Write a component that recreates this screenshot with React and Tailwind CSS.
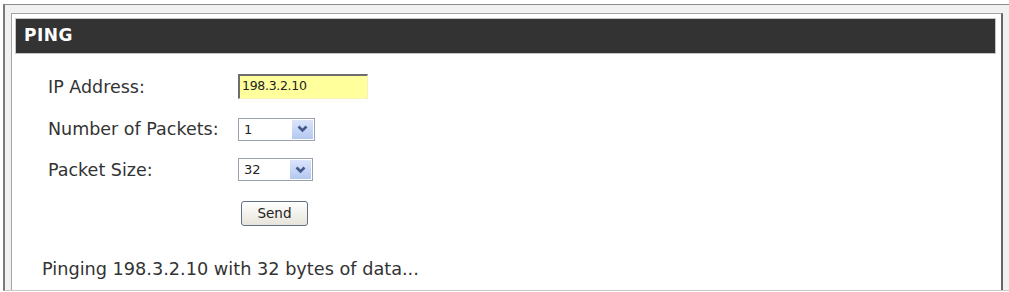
import React from 'react'

function Select({ value, width }) {
  return (
    <div className={`flex h-[23px] items-center border border-[#9aa3ad] bg-white ${width}`}>
      <span className="flex-1 pl-[5px] text-[13px] leading-none text-[#222]">{value}</span>
      <span className="mr-[1px] flex h-[19px] w-[21px] items-center justify-center bg-gradient-to-b from-[#dbe5fb] to-[#b3c8f1]">
        <svg width="11" height="8" viewBox="0 0 11 8">
          <path d="M1.5 1.5 L5.5 5.5 L9.5 1.5" fill="none" stroke="#44598a" strokeWidth="2.6" />
        </svg>
      </span>
    </div>
  )
}

export default function App() {
  return (
    <div className="h-[292px] w-[1009px] overflow-hidden bg-white pl-[3px] pt-[4px] font-['DejaVu_Sans',sans-serif]">
      <div className="h-[287px] border-l-2 border-t border-b border-l-[#7a7a7a] border-t-[#8c8c8c] border-b-[#c8c8c8] bg-[#f1f1f1] pl-[6px] pt-[8px]">
        <div className="h-full w-[992px] border-l border-t border-[#a4a4a4] border-r-2 border-r-[#666] bg-white pl-[3px] pr-[5px] pt-[4px]">
          {/* Header */}
          <div className="flex h-[36px] items-center border border-[#c4c4c4] bg-[#333] pl-[8px]">
            <span className="text-[17px] font-bold tracking-[0.5px] text-white">PING</span>
          </div>

          {/* Form */}
          <div className="pl-[33px] pt-[18px] text-[17.5px] text-[#333]">
            <div className="flex items-center">
              <span className="w-[190px] pt-[2px]">IP Address:</span>
              <div className="flex h-[25px] w-[130px] items-center border-l-2 border-t-2 border-r border-b border-l-[#6e6e6e] border-t-[#6e6e6e] border-r-[#f2f2c0] border-b-[#f2f2c0] bg-[#ffff9c] pl-[2px] text-[12.5px] leading-none tracking-[-0.3px] text-[#222]">
                198.3.2.10
              </div>
            </div>
            <div className="mt-[16px] flex items-center">
              <span className="w-[190px]">Number of Packets:</span>
              <Select value="1" width="w-[77px]" />
            </div>
            <div className="mt-[14px] flex items-center">
              <span className="w-[190px]">Packet Size:</span>
              <Select value="32" width="w-[75px]" />
            </div>
            <div className="mt-[18px] flex">
              <span className="w-[193px]" />
              <button className="h-[25px] w-[67px] rounded-[3px] border border-[#5f6f85] bg-gradient-to-b from-white to-[#e6e4da] text-[13.5px] text-[#222]">
                Send
              </button>
            </div>
          </div>

          <div className="pl-[27px] pt-[30px] text-[17.7px] text-[#333]">
            Pinging 198.3.2.10 with 32 bytes of data...
          </div>
        </div>
      </div>
    </div>
  )
}
